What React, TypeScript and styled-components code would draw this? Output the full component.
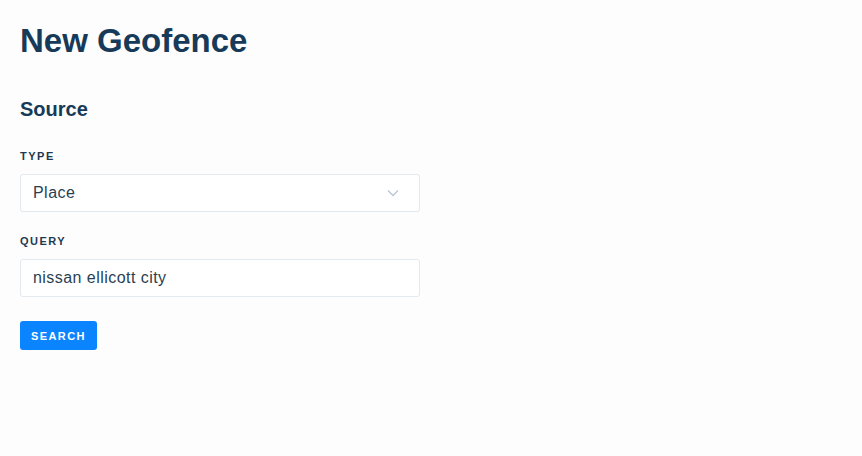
import React from 'react';
import styled, { createGlobalStyle } from 'styled-components';

const GlobalStyle = createGlobalStyle`
  html, body {
    margin: 0;
    background: #fdfdfd;
  }

  body {
    font-family: 'Liberation Sans', Arial, sans-serif;
    color: #1a3a56;
  }
`;

const Page = styled.div`
  padding: 21px 20px;
`;

const Title = styled.h1`
  margin: 0;
  font-size: 33px;
  line-height: 40px;
  font-weight: 700;
  color: #173a58;
`;

const SectionTitle = styled.h2`
  margin: 36px 0 0;
  font-size: 20px;
  line-height: 24px;
  font-weight: 700;
  color: #173a58;
`;

const Form = styled.form`
  display: flex;
  flex-direction: column;
  width: 400px;
  margin-top: 28px;
`;

const Field = styled.div`
  display: flex;
  flex-direction: column;
  gap: 11px;

  & + & {
    margin-top: 22px;
  }
`;

const Label = styled.label`
  font-size: 11px;
  line-height: 14px;
  font-weight: 700;
  letter-spacing: 1.5px;
  text-transform: uppercase;
  color: #1d3a52;
`;

const Box = styled.div`
  display: flex;
  align-items: center;
  box-sizing: border-box;
  height: 38px;
  padding: 0 12px;
  background: #fff;
  border: 1px solid #e3e9ef;
  border-radius: 3px;
  font-size: 16px;
  letter-spacing: 0.45px;
  color: #2a3f52;
`;

const Value = styled.span`
  flex: 1;
`;

const Chevron = styled.svg`
  width: 12px;
  height: 8px;
  margin-right: 8px;
`;

const Button = styled.button`
  align-self: flex-start;
  margin-top: 24px;
  height: 29px;
  padding: 0 11px;
  border: none;
  border-radius: 3px;
  background: #0a84ff;
  color: #fff;
  font-family: 'Liberation Sans', Arial, sans-serif;
  font-size: 11px;
  font-weight: 700;
  letter-spacing: 1.4px;
  text-transform: uppercase;
  cursor: pointer;
`;

export default function App() {
  return (
    <>
      <GlobalStyle />
      <Page>
        <Title>New Geofence</Title>
        <SectionTitle>Source</SectionTitle>
        <Form onSubmit={(e) => e.preventDefault()}>
          <Field>
            <Label>Type</Label>
            <Box>
              <Value>Place</Value>
              <Chevron viewBox="0 0 12 8">
                <path d="M1 1.5l5 5 5-5" fill="none" stroke="#b9c6d3" strokeWidth="1.3" />
              </Chevron>
            </Box>
          </Field>
          <Field>
            <Label>Query</Label>
            <Box>
              <Value>nissan ellicott city</Value>
            </Box>
          </Field>
          <Button type="submit">Search</Button>
        </Form>
      </Page>
    </>
  );
}
